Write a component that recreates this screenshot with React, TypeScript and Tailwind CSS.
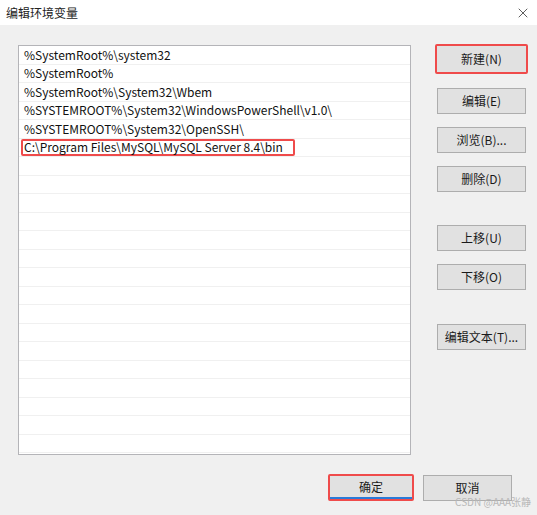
import { X } from "lucide-react";

const paths = [
  "%SystemRoot%\\system32",
  "%SystemRoot%",
  "%SystemRoot%\\System32\\Wbem",
  "%SYSTEMROOT%\\System32\\WindowsPowerShell\\v1.0\\",
  "%SYSTEMROOT%\\System32\\OpenSSH\\",
  "C:\\Program Files\\MySQL\\MySQL Server 8.4\\bin",
];

const font = { fontFamily: '"Noto Sans CJK SC", "Noto Sans", sans-serif' };

function Btn({ label, className = "" }: { label: string; className?: string }) {
  return (
    <div
      className={`flex h-[26px] w-[89px] items-center justify-center border border-[#adadad] bg-[#e1e1e1] text-[12px] text-[#1a1a1a] ${className}`}
    >
      {label}
    </div>
  );
}

export default function App() {
  const rows = Array.from({ length: 22 }, (_, i) => paths[i] ?? "");

  return (
    <div className="relative h-[515px] w-[537px] overflow-hidden bg-[#f0f0f0]" style={font}>
      {/* Title bar */}
      <div className="flex h-[25px] items-center justify-between bg-white pl-[6px] pr-[6px]">
        <span className="text-[12px] text-[#222]">编辑环境变量</span>
        <X className="h-[16px] w-[16px] text-[#333]" strokeWidth={1.2} />
      </div>

      <div className="flex pl-[18px] pt-[20px]">
        {/* Path list */}
        <div className="h-[410px] w-[393px] overflow-hidden border border-[#b4b4b8] bg-white">
          {rows.map((p, i) => (
            <div key={i} className="flex h-[18.5px] items-center border-b border-[#f0f0f0] pl-[5px] text-[12px] text-[#111]">
              {i === 5 ? (
                <span className="-ml-[3px] flex h-[17px] items-center rounded-[2px] border-2 border-[#ef4b4b] pl-[1px] pr-[10px]">
                  {p}
                </span>
              ) : (
                p
              )}
            </div>
          ))}
        </div>

        {/* Right buttons */}
        <div className="ml-[26px] flex flex-col">
          <div className="-ml-[2px] -mt-[1px] rounded-[2px] border-2 border-[#ef4b4b]">
            <Btn label="新建(N)" className="border-0" />
          </div>
          <Btn label="编辑(E)" className="mt-[14px]" />
          <Btn label="浏览(B)..." className="mt-[13px]" />
          <Btn label="删除(D)" className="mt-[13px]" />
          <Btn label="上移(U)" className="mt-[33px]" />
          <Btn label="下移(O)" className="mt-[13px]" />
          <Btn label="编辑文本(T)..." className="mt-[34px]" />
        </div>
      </div>

      {/* Bottom buttons */}
      <div className="flex justify-end gap-[9px] pr-[25px] pt-[19px]">
        <div className="rounded-[2px] border-2 border-[#ef4b4b]">
          <div className="flex h-[23px] w-[82px] items-center justify-center border-b-2 border-[#2a7ad8] bg-[#e1e1e1] text-[12px] text-[#1a1a1a]">
            确定
          </div>
        </div>
        <Btn label="取消" className="mt-[1px] w-[86px]" />
      </div>

      {/* Watermark */}
      <span className="absolute bottom-[6px] right-[6px] text-[10px] text-[#b8b8b8]">CSDN @AAA张静</span>
    </div>
  );
}
